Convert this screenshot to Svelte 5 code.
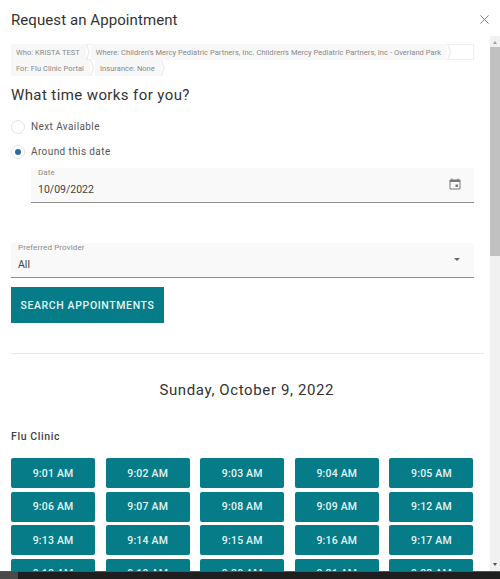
<script>
  const times = [
    '9:01 AM', '9:02 AM', '9:03 AM', '9:04 AM', '9:05 AM',
    '9:06 AM', '9:07 AM', '9:08 AM', '9:09 AM', '9:12 AM',
    '9:13 AM', '9:14 AM', '9:15 AM', '9:16 AM', '9:17 AM',
    '9:18 AM', '9:19 AM', '9:20 AM', '9:21 AM', '9:22 AM'
  ]
</script>

<div class="window">
  <header class="head">
    <h1>Request an Appointment</h1>
    <button class="close" aria-label="Close">
      <svg viewBox="0 0 9 9" width="9" height="9" fill="none" stroke="#757575" stroke-width="0.9">
        <path d="M0.4 0.4 8.6 8.6M8.6 0.4 0.4 8.6" />
      </svg>
    </button>
  </header>

  <div class="scroller">
    <main class="content">
      <div class="crumbs">
        <div class="crumb-row boxed">
          <span class="crumb">Who: KRISTA TEST</span>
          <span class="crumb">Where: Children's Mercy Pediatric Partners, Inc. Children's Mercy Pediatric Partners, Inc - Overland Park</span>
        </div>
        <div class="crumb-row">
          <span class="crumb">For: Flu Clinic Portal</span>
          <span class="crumb">Insurance: None</span>
        </div>
      </div>

      <h2>What time works for you?</h2>

      <div class="radio-row">
        <span class="radio"></span>
        <span>Next Available</span>
      </div>
      <div class="radio-row second">
        <span class="radio on"></span>
        <span>Around this date</span>
      </div>

      <div class="field date">
        <div class="field-text">
          <span class="label">Date</span>
          <span class="value">10/09/2022</span>
        </div>
        <svg class="cal" viewBox="0 0 12 12" width="12" height="12">
          <path fill="#777" d="M2.5 0.5h1v1h5v-1h1v1h1a1 1 0 0 1 1 1v8a1 1 0 0 1-1 1h-9a1 1 0 0 1-1-1v-8a1 1 0 0 1 1-1h1zM1.5 4v6.5h9V4z" />
          <rect x="6.5" y="6.5" width="2.5" height="2.5" fill="#777" />
        </svg>
      </div>

      <div class="field provider">
        <div class="field-text">
          <span class="label">Preferred Provider</span>
          <span class="value">All</span>
        </div>
        <span class="caret"></span>
      </div>

      <button class="search">SEARCH APPOINTMENTS</button>

      <hr />

      <h3>Sunday, October 9, 2022</h3>
      <h4>Flu Clinic</h4>

      <div class="slots">
        {#each times as t}
          <button class="slot">{t}</button>
        {/each}
      </div>
    </main>

    <div class="scrollbar">
      <span class="arrow up"></span>
      <span class="thumb"></span>
      <span class="arrow down"></span>
    </div>
  </div>

  <div class="taskbar"><span class="task-start"></span></div>
</div>

<style>
  :global(body) {
    margin: 0;
    background: #fff;
    font-family: Roboto, "Liberation Sans", sans-serif;
  }

  .window {
    width: 500px;
    height: 579px;
    display: flex;
    flex-direction: column;
    overflow: hidden;
    color: #333;
  }

  .head {
    height: 36px;
    flex-shrink: 0;
    display: flex;
    align-items: flex-start;
    justify-content: space-between;
    padding: 0 11px;
    box-sizing: border-box;
  }
  h1 {
    margin: 10px 0 0;
    font-size: 15px;
    line-height: 20px;
    font-weight: 400;
    letter-spacing: 0.08px;
    color: #333;
  }
  .close {
    margin-top: 15px;
    padding: 0;
    border: 0;
    background: none;
    display: flex;
  }

  .scroller {
    flex: 1;
    min-height: 0;
    display: flex;
    overflow: hidden;
  }
  .content {
    flex: 1;
    min-width: 0;
    padding: 8px 16.5px 0 11px;
    box-sizing: border-box;
    overflow: hidden;
  }

  .crumbs {
    font-size: 7.5px;
    letter-spacing: 0.05px;
    color: #888;
  }
  .crumb-row {
    display: flex;
    height: 16px;
    align-items: stretch;
  }
  .crumb-row.boxed {
    height: 16px;
    box-shadow: inset 0 0 0 1px #eee;
  }
  .crumb {
    position: relative;
    display: flex;
    align-items: center;
    padding: 0 6px 0 5px;
    margin-right: 5px;
    background: #f7f7f7;
    white-space: nowrap;
  }
  .crumb::after {
    content: '';
    position: absolute;
    top: 0;
    bottom: 0;
    right: -4px;
    width: 4px;
    background: #ececec;
    clip-path: polygon(0 0, 35% 0, 100% 50%, 35% 100%, 0 100%, 65% 50%);
  }

  h2 {
    margin: 9px 0 0;
    font-size: 15px;
    line-height: 20px;
    font-weight: 400;
    letter-spacing: 0.4px;
    color: #333;
  }

  .radio-row {
    display: flex;
    align-items: center;
    gap: 6px;
    margin-top: 13px;
    height: 17px;
    font-size: 10px;
    letter-spacing: 0.4px;
    color: #555;
  }
  .radio-row.second {
    margin-top: 8px;
  }
  .radio {
    width: 12px;
    height: 12px;
    border: 1px solid #e2e2e2;
    border-radius: 50%;
    background: #fff;
    display: flex;
    align-items: center;
    justify-content: center;
  }
  .radio.on::before {
    content: '';
    width: 6px;
    height: 6px;
    border-radius: 50%;
    background: #2d6a9f;
  }

  .field {
    display: flex;
    align-items: center;
    justify-content: space-between;
    height: 34px;
    background: #f9f9f9;
    border-bottom: 1px solid #8e8e8e;
    padding: 0 12px 0 7px;
  }
  .field.date {
    margin: 8px 0 0 20px;
  }
  .field.provider {
    margin-top: 40px;
  }
  .field-text {
    display: flex;
    flex-direction: column;
    align-self: flex-start;
  }
  .label {
    font-size: 8px;
    line-height: 10px;
    letter-spacing: 0.12px;
    color: #8a8a8a;
  }
  .value {
    font-size: 10.5px;
    line-height: 16px;
    margin-top: 4px;
    color: #444;
  }
  .cal {
    margin-bottom: 3px;
    margin-right: 1px;
  }
  .caret {
    width: 0;
    height: 0;
    border-left: 3.5px solid transparent;
    border-right: 3.5px solid transparent;
    border-top: 3.5px solid #666;
    margin-right: 2px;
    margin-bottom: 2px;
  }

  .search {
    display: block;
    margin-top: 9px;
    width: 153px;
    height: 36px;
    padding: 0;
    border: 0;
    background: #057c88;
    color: #e4f4f5;
    font: 500 10.5px Roboto, sans-serif;
    letter-spacing: 0.63px;
  }

  hr {
    margin: 30px -10px 0 0;
    border: 0;
    border-top: 1px solid #e9e9e9;
  }

  h3 {
    margin: 26px -9px 0 0;
    font-size: 15px;
    line-height: 20px;
    font-weight: 400;
    letter-spacing: 0.62px;
    text-align: center;
    color: #333;
  }
  h4 {
    margin: 30px 0 0;
    font-size: 10.5px;
    line-height: 14px;
    font-weight: 500;
    letter-spacing: 0.6px;
    color: #444;
  }

  .slots {
    margin-top: 14px;
    display: grid;
    grid-template-columns: repeat(5, 1fr);
    column-gap: 10.5px;
    row-gap: 3.5px;
  }
  .slot {
    height: 30px;
    padding: 0;
    border: 0;
    border-radius: 2px;
    background: #057c88;
    color: #e4f4f5;
    font: 500 10.5px Roboto, sans-serif;
    letter-spacing: 0.2px;
  }

  .scrollbar {
    width: 10px;
    flex-shrink: 0;
    background: #f1f1f1;
    display: flex;
    flex-direction: column;
    align-items: center;
  }
  .thumb {
    width: 100%;
    height: 209px;
    background: #c1c1c1;
  }
  .arrow {
    width: 0;
    height: 0;
    border-left: 2.5px solid transparent;
    border-right: 2.5px solid transparent;
  }
  .arrow.up {
    margin: 5px 0 3px;
    border-bottom: 3px solid #a0a0a0;
  }
  .arrow.down {
    margin-top: auto;
    margin-bottom: 5px;
    border-top: 3px solid #505050;
  }

  .taskbar {
    height: 8px;
    flex-shrink: 0;
    background: #1f1f1f;
    border-top: 1px solid #555;
    box-sizing: border-box;
    display: flex;
  }
  .task-start {
    width: 18px;
    background: #4a4a4a;
  }
</style>
